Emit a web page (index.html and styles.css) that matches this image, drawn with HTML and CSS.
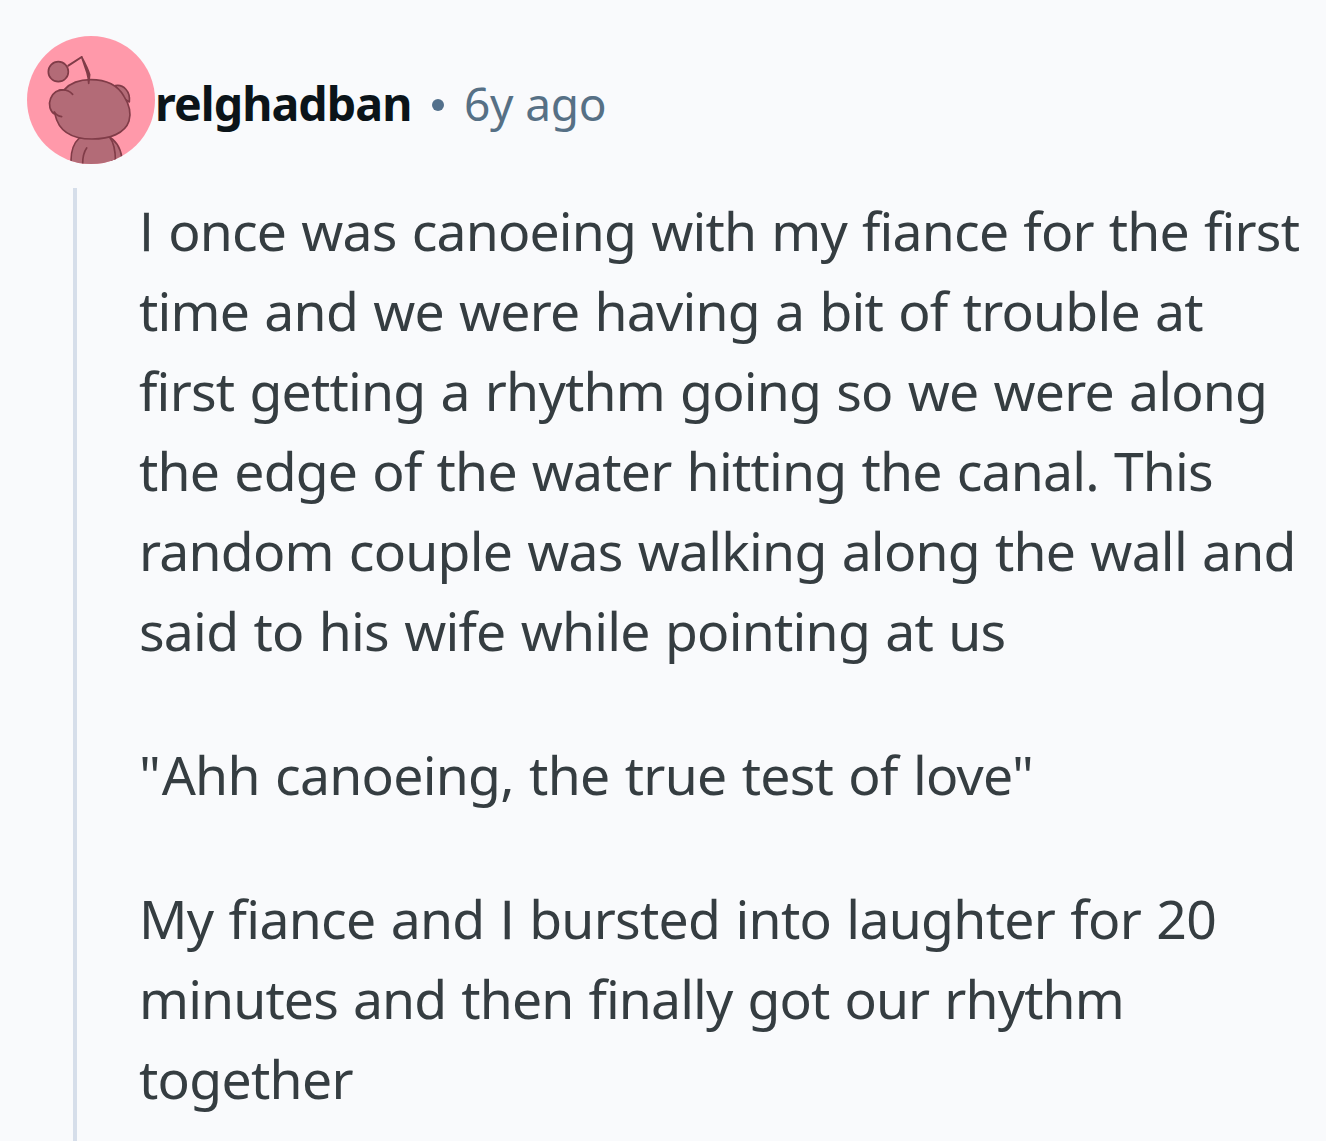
FILE: index.html
```
<!DOCTYPE html>
<html lang="en">
<head>
<meta charset="utf-8">
<title>relghadban's comment</title>
<link rel="stylesheet" href="styles.css">
</head>
<body>
<article class="comment">
  <header class="head">
    <svg class="avatar" viewBox="21 18 384 384" aria-hidden="true">
      <defs><clipPath id="round"><circle cx="213" cy="210" r="192"/></clipPath></defs>
      <g clip-path="url(#round)">
        <rect x="21" y="18" width="384" height="384" fill="#ff99aa"/>
        <g fill="#b36b77" stroke="#803c48" stroke-width="5" stroke-linecap="round" stroke-linejoin="round">
          <path d="M262 318C288 330 302 358 306 384V410H278Z"/>
          <path d="M178 324C158 342 150 370 154 410H286C288 370 284 340 268 320Z"/>
          <path d="M200 354C190 368 187 386 188 410" fill="none"/>
          <path d="M286 167C310 162 332 184 328 216L310 205Z"/>
          <path d="M133 179C152 158 180 149 212 149C260 149 294 167 312 199C328 224 334 250 327 273C315 310 270 327 216 327C158 327 116 304 105 253C90 245 84 224 92 205C99 188 115 179 133 179Z"/>
          <path d="M118 181C134 177 148 182 158 193M103 246C109 255 117 259 125 260" fill="none"/>
          <path d="M145 107L185 81" fill="none" stroke-width="6"/>
          <path d="M185 81C194 98 204 118 209 134L206 160C206 150 204 138 201 128Z" fill="#803c48" stroke-width="5"/>
          <circle cx="115" cy="125" r="30"/>
        </g>
      </g>
    </svg>
    <span class="name">relghadban</span>
    <span class="dot"></span>
    <span class="age">6y ago</span>
  </header>
  <div class="thread">
    <div class="text">
      <p><span class="line l1"><span class="cap-i">I</span> once was canoeing with my fiance for the first</span>
      <span class="line l2">time and we were having a bit of trouble at</span>
      <span class="line l3">first getting a rhythm going so we were along</span>
      <span class="line l4">the edge of the water hitting the canal. This</span>
      <span class="line l5">random couple was walking along the wall and</span>
      <span class="line l6">said to his wife while pointing at us</span></p>
      <p><span class="line l7"><span class="quote">"</span>Ahh canoeing, the true test of love"</span></p>
      <p><span class="line l8">My fiance and <span class="cap-i">I</span> bursted into laughter for 20</span>
      <span class="line l9">minutes and then finally got our rhythm</span>
      <span class="line l10">together</span></p>
    </div>
  </div>
</article>
</body>
</html>
```
FILE: styles.css
```
body {
  margin: 0;
  background: #f9fafc;
  font-family: "Noto Sans", "Open Sans", sans-serif;
  color: #353d41;
  overflow: hidden;
}
.comment {
  height: 1141px;
  box-sizing: border-box;
  padding: 36px 0 0 27px;
  display: flex;
  flex-direction: column;
  overflow: hidden;
}
.head {
  display: flex;
  align-items: center;
  height: 128px;
  flex: none;
  white-space: nowrap;
  line-height: 64px;
}
.avatar { width: 128px; height: 128px; flex: none; }
.name {
  width: 277px;
  font-size: 46.5px;
  font-weight: 700;
  letter-spacing: -0.93px;
  color: #0b1419;
  padding-top: 5px;
}
.dot {
  width: 12px;
  height: 12px;
  border-radius: 50%;
  background: #53708c;
  margin: 10px 20px 0 0;
}
.age {
  font-size: 46px;
  letter-spacing: -0.2px;
  color: #567085;
  padding-top: 5px;
}
.thread {
  flex: 1;
  margin: 24px 0 0 46px;
  border-left: 4px solid #d6deea;
  padding: 3px 0 0 62px;
}
.text p { margin: 0 0 64px; }
.line {
  display: block;
  width: max-content;
  font-size: 53.5px;
  line-height: 80px;
  word-spacing: 2px;
  white-space: nowrap;
}
.cap-i {
  font-family: "Open Sans", sans-serif;
  line-height: 1;
  -webkit-text-stroke: 0.5px currentColor;
}
.quote { letter-spacing: 0.8px; }
.l1 { letter-spacing: -0.82px; }
.l2 { letter-spacing: -0.77px; }
.l3 { letter-spacing: -0.79px; }
.l4 { letter-spacing: -0.8px; }
.l5 { letter-spacing: -0.78px; }
.l6 { letter-spacing: -0.76px; }
.l7 { letter-spacing: -0.72px; }
.l8 { letter-spacing: -0.71px; }
.l9 { letter-spacing: -0.88px; }
.l10 { letter-spacing: -0.7px; }
```
